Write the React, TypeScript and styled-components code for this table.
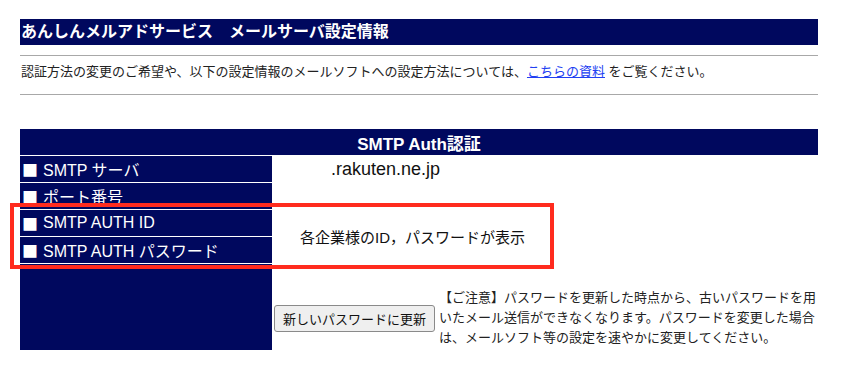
import React from "react";
import styled, { createGlobalStyle } from "styled-components";

const NAVY = "#00085e";

const GlobalStyle = createGlobalStyle`
  body {
    margin: 0;
    background: #fff;
    color: #111;
    font-family: "Liberation Sans", "Noto Sans CJK JP", sans-serif;
  }
`;

const Page = styled.div`
  width: 798px;
  padding: 19px 0 0 20px;
`;

const TitleBar = styled.h1`
  margin: 0;
  height: 26px;
  line-height: 26px;
  padding-left: 1px;
  background: ${NAVY};
  color: #fff;
  font-size: 16px;
  font-weight: bold;
`;

const Rule = styled.hr`
  margin: 0;
  border: none;
  height: 1px;
  background: #a8a8a8;
`;

const Intro = styled.p`
  margin: 6px 0 12px 1px;
  font-size: 13px;
  line-height: 20px;
  color: #222;
`;

const DocLink = styled.a`
  color: #2140f2;
  text-decoration: underline;
`;

const TableWrap = styled.div`
  position: relative;
  margin-top: 34px;
`;

const AuthTable = styled.div`
  display: grid;
  grid-template-columns: 252px 546px;
  grid-template-rows: 26px repeat(4, 26px) 86px;
  row-gap: 1px;
  background: #fff;
`;

const TableHead = styled.div`
  grid-column: 1 / span 2;
  display: flex;
  align-items: center;
  justify-content: center;
  background: ${NAVY};
  color: #fff;
  font-size: 17px;
  font-weight: bold;
`;

const Label = styled.div<{ $row: number }>`
  grid-column: 1;
  grid-row: ${(p) => p.$row};
  display: flex;
  align-items: center;
  padding-left: 2px;
  background: ${NAVY};
  color: #fff;
  font-size: 16px;
  white-space: nowrap;
`;

const Bullet = styled.span`
  font-family: "Noto Sans CJK JP", sans-serif;
  margin-right: 5px;
`;

const Value = styled.div<{ $row: number; $span?: number; $indent: number; $size?: number }>`
  grid-column: 2;
  grid-row: ${(p) => p.$row} / span ${(p) => p.$span ?? 1};
  display: flex;
  align-items: center;
  padding-left: ${(p) => p.$indent}px;
  font-size: ${(p) => p.$size ?? 16}px;
  color: #111;
`;

const ActionCell = styled.div`
  grid-column: 2;
  grid-row: 6;
  display: flex;
  align-items: center;
  gap: 4px;
  padding: 22px 0 0 2px;
`;

const UpdateButton = styled.button`
  height: 27px;
  padding: 0 8px;
  border: 1px solid #8a8a8a;
  border-radius: 3px;
  background: #efefef;
  color: #111;
  font-family: "Liberation Sans", "Noto Sans CJK JP", sans-serif;
  font-size: 13px;
  white-space: nowrap;
`;

const Note = styled.p`
  margin: 0;
  width: 378px;
  font-size: 13px;
  line-height: 20px;
  color: #222;
`;

const Highlight = styled.div`
  position: absolute;
  top: 74px;
  left: -10px;
  width: 544px;
  height: 66px;
  box-sizing: border-box;
  border: 4px solid #ff2b1e;
  pointer-events: none;
`;

const labels = [
  "SMTP サーバ",
  "ポート番号",
  "SMTP AUTH ID",
  "SMTP AUTH パスワード",
];

export default function App() {
  return (
    <>
      <GlobalStyle />
      <Page>
        <TitleBar>あんしんメルアドサービス　メールサーバ設定情報</TitleBar>
        <Rule style={{ marginTop: 10 }} />
        <Intro>
          認証方法の変更のご希望や、以下の設定情報のメールソフトへの設定方法については、
          <DocLink href="#">こちらの資料</DocLink> をご覧ください。
        </Intro>
        <Rule />
        <TableWrap>
          <AuthTable>
            <TableHead>SMTP Auth認証</TableHead>
            {labels.map((text, i) => (
              <Label key={text} $row={i + 2}>
                <Bullet>■</Bullet>
                {text}
              </Label>
            ))}
            <Label $row={6} />
            <Value $row={2} $indent={59} $size={18}>.rakuten.ne.jp</Value>
            <Value $row={3} $indent={0} />
            <Value $row={4} $span={2} $indent={28} $size={15}>
              各企業様のID，パスワードが表示
            </Value>
            <ActionCell>
              <UpdateButton type="button">新しいパスワードに更新</UpdateButton>
              <Note>
                【ご注意】パスワードを更新した時点から、古いパスワードを用いたメール送信ができなくなります。パスワードを変更した場合は、メールソフト等の設定を速やかに変更してください。
              </Note>
            </ActionCell>
          </AuthTable>
          <Highlight />
        </TableWrap>
      </Page>
    </>
  );
}
